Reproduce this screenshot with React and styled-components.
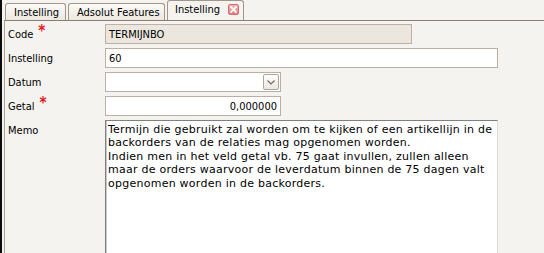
import React from "react";
import styled, { createGlobalStyle } from "styled-components";

const Global = createGlobalStyle`
  html, body { margin: 0; padding: 0; }
  body { background: #f5f3ef; overflow: hidden; }
`;

const uiFont = `"DejaVu Sans", "Liberation Sans", sans-serif`;

const Window = styled.div`
  width: 544px;
  height: 253px;
  overflow: hidden;
  box-sizing: border-box;
  border-left: 2px solid #0c0c0c;
  background: #f5f3ef;
  display: flex;
  flex-direction: column;
  padding-left: 2px;
  font-family: ${uiFont};
  font-stretch: condensed;
  font-size: 11px;
  color: #000;
`;

const TabStrip = styled.div`
  height: 20px;
  display: flex;
  align-items: flex-end;
  gap: 2px;
  padding-left: 1px;
  flex-shrink: 0;
`;

const Tab = styled.div`
  box-sizing: border-box;
  width: ${(p) => p.$w}px;
  height: ${(p) => (p.$active ? "20px" : "17px")};
  display: flex;
  align-items: center;
  justify-content: space-between;
  padding: ${(p) => (p.$active ? "0 4px 2px 7px" : "0 0 0 8px")};
  border: 1px solid #a19689;
  border-bottom: none;
  border-radius: 3px 3px 0 0;
  background: ${(p) =>
    p.$active ? "#f5f3ef" : "linear-gradient(#fbfaf7, #ebe8e0)"};
  white-space: nowrap;
  overflow: hidden;
`;

const CloseBox = styled.span`
  box-sizing: border-box;
  width: 11px;
  height: 11px;
  border-radius: 2px;
  border: 1px solid #cf6f6f;
  background: linear-gradient(#f3b3b3, #e27e7e);
  display: inline-flex;
  align-items: center;
  justify-content: center;
`;

const Panel = styled.div`
  flex: 1;
  border-top: 1px solid #8e7d6e;
  border-left: 1px solid #a99f94;
  padding: 3px 0 0 3px;
  display: grid;
  grid-template-columns: 97px 1fr;
  grid-auto-rows: 20px;
  row-gap: 4px;
  align-content: start;
`;

const Label = styled.div`
  display: flex;
  align-items: ${(p) => (p.$top ? "flex-start" : "center")};
  padding-top: ${(p) => (p.$top ? "4px" : "0")};
  white-space: nowrap;
`;

const Req = styled.span`
  color: #e8141c;
  font-size: 15px;
  font-weight: bold;
  margin-left: 5px;
  line-height: 1;
  position: relative;
  top: -3px;
`;

const Field = styled.div`
  box-sizing: border-box;
  width: ${(p) => p.$w}px;
  height: 20px;
  border: 1px solid #bcb0a4;
  background: ${(p) => (p.$readonly ? "#ebe7de" : "#fff")};
  display: flex;
  align-items: center;
  justify-content: ${(p) => (p.$right ? "flex-end" : "flex-start")};
  padding: 0 3px;
`;

const DropButton = styled.span`
  box-sizing: border-box;
  width: 16px;
  height: 16px;
  margin-left: auto;
  margin-right: -2px;
  border: 1px solid #b0a597;
  border-radius: 2px;
  background: linear-gradient(#ffffff, #ebe7df);
  display: flex;
  align-items: center;
  justify-content: center;
`;

const Memo = styled.div`
  grid-row: span 6;
  box-sizing: border-box;
  width: 393px;
  height: 140px;
  background: #fff;
  border-top: 1px solid #808080;
  border-left: 1px solid #808080;
  border-right: 1px solid #dcdcdc;
  box-shadow: inset 1px 0 0 #c8c8c8;
  padding: 2px 3px 0 2px;
  font-family: "DejaVu Sans", Verdana, sans-serif;
  font-stretch: normal;
  font-size: 11px;
  letter-spacing: 0.25px;
  line-height: 13.4px;
  white-space: pre;
`;

export default function App() {
  return (
    <>
      <Global />
      <Window>
        <TabStrip>
          <Tab $w={61}>Instelling</Tab>
          <Tab $w={97}>Adsolut Features</Tab>
          <Tab $w={77} $active>
            Instelling
            <CloseBox>
              <svg width="7" height="7" viewBox="0 0 7 7">
                <path d="M1 1 L6 6 M6 1 L1 6" stroke="#fff" strokeWidth="1.8" strokeLinecap="square" />
              </svg>
            </CloseBox>
          </Tab>
        </TabStrip>
        <Panel>
          <Label>
            Code<Req>*</Req>
          </Label>
          <Field $w={307} $readonly>TERMIJNBO</Field>

          <Label>Instelling</Label>
          <Field $w={393}>60</Field>

          <Label>Datum</Label>
          <Field $w={176}>
            <DropButton>
              <svg width="8" height="5" viewBox="0 0 8 5">
                <path d="M0.5 0.5 L4 4 L7.5 0.5" fill="none" stroke="#6d665e" strokeWidth="1.1" />
              </svg>
            </DropButton>
          </Field>

          <Label>
            Getal<Req>*</Req>
          </Label>
          <Field $w={176} $right>0,000000</Field>

          <Label $top>Memo</Label>
          <Memo>
            {"Termijn die gebruikt zal worden om te kijken of een artikellijn in de\nbackorders van de relaties mag opgenomen worden.\nIndien men in het veld getal vb. 75 gaat invullen, zullen alleen\nmaar de orders waarvoor de leverdatum binnen de 75 dagen valt\nopgenomen worden in de backorders."}
          </Memo>
        </Panel>
      </Window>
    </>
  );
}
